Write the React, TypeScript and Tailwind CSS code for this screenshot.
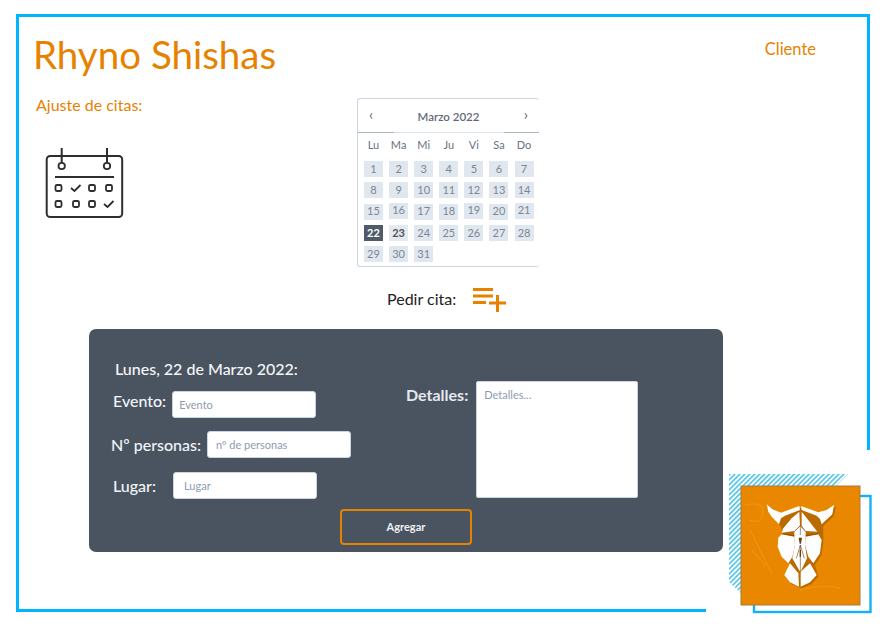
const weekDays = ['Lu', 'Ma', 'Mi', 'Ju', 'Vi', 'Sa', 'Do'];
const days = Array.from({ length: 31 }, (_, i) => i + 1);

function CalendarIcon() {
  const box = (x: number, y: number) => <rect key={`${x}-${y}`} x={x - 3} y={y - 3} width="6" height="6" rx="1.5" />;
  const check = (x: number, y: number) => <path key={`c${x}-${y}`} d={`M${x - 5} ${y}l3.5 3 6-6`} />;
  return (
    <svg width="80" height="72" viewBox="0 0 80 72" fill="none" stroke="#2e2e2e" strokeWidth="1.8" className="ml-[11px] mt-[35px]">
      <rect x="1.7" y="9" width="75.5" height="61" rx="3.5" strokeWidth="2" />
      <path d="M16.7 1v15M62 1v15" strokeWidth="2" />
      <circle cx="16.7" cy="19" r="3.2" fill="#fff" />
      <circle cx="62" cy="19" r="3.2" fill="#fff" />
      <path d="M10 30h59" strokeWidth="2" />
      {box(13.5, 41)}
      {check(31, 41)}
      {box(47, 41)}
      {box(64, 41)}
      {box(13.5, 57)}
      {box(31, 57)}
      {box(47, 57)}
      {check(64, 57)}
    </svg>
  );
}

function Logo() {
  return (
    <svg width="150" height="146" viewBox="725 470 150 146" className="absolute left-[725px] top-[470px]">
      <defs>
        <pattern id="hatch" width="3.5" height="5" patternUnits="userSpaceOnUse" patternTransform="rotate(45)">
          <rect width="1.8" height="5" fill="#5cc8ec" />
        </pattern>
        <filter id="soft" x="-20%" y="-20%" width="140%" height="140%">
          <feGaussianBlur stdDeviation="2.2" />
        </filter>
      </defs>
      <path d="M729 474H848L836 486H741V593L729 582Z" fill="url(#hatch)" />
      <rect x="754" y="496" width="116.5" height="116" fill="none" stroke="#14b1f7" strokeWidth="2.4" />
      <rect x="741" y="486" width="119" height="119" fill="#e98700" stroke="#a87a3c" strokeWidth="1" />
      <path d="M745 505q20-4 18 8t-14 7M752 550l14 16M750 530l22 44M800 590q20-6 40-2" fill="none" stroke="#f09a1e" strokeWidth="1.4" opacity="0.6" />
      <g transform="translate(755 495) scale(0.3333)">
        <path d="M35 28 78 53 133 33 140 33 190 52 237 30 232 58 200 88 200 135 195 175 175 205 185 240 165 262 135 275 105 262 88 240 105 205 80 185 68 155 70 128 80 113 72 88 50 65Z" fill="#a85f00" filter="url(#soft)" transform="translate(5 5)" opacity="0.7" />
        <g fill="#fff">
          <path d="M35 28 52 42 78 53 133 33 135 45 90 62 78 70 72 88 50 65 40 50Z" />
          <path d="M237 30 232 58 200 88 195 72 185 62 140 45 138 33 190 52 215 45Z" />
          <path d="M133 50 135 92 118 108 80 113 85 100 110 70Z" />
          <path d="M140 50 162 78 187 110 152 108 140 92Z" />
          <path d="M70 128 80 118 118 125 120 150 112 185 100 205 80 185 68 155Z" />
          <path d="M152 125 190 118 200 135 195 175 175 205 160 185 150 150Z" />
          <path d="M105 205 130 235 132 275 105 262 88 240Z" />
          <path d="M165 205 185 240 165 262 137 275 137 230Z" />
          <path d="M118 108 136 92 152 108 152 125 150 150 156 190 136 232 112 190 120 150 118 125Z" />
        </g>
        <path d="M136 92V120M136 150V232M118 110 136 92 152 110M80 116 118 122M190 116 152 122M124 190 136 150 148 190" stroke="#6b3d0a" strokeWidth="1.8" fill="none" />
        <path d="M131 128h10l-3 18h-4ZM134 165h4v20h-4Z" fill="#6b3d0a" />
      </g>
    </svg>
  );
}

function Calendar() {
  return (
    <div className="w-[182px] h-[169px] rounded-[3px] border-y border-l border-[#ced4de] bg-white">
      <div className="h-[33px] flex items-center justify-between px-[11px] text-[#5f6a78]">
        <span className="text-[15px] leading-none -mt-[3px]">‹</span>
        <span className="text-[11.5px] font-semibold pt-[2px]">Marzo 2022</span>
        <span className="text-[15px] leading-none -mt-[3px]">›</span>
      </div>
      <div className="flex h-px bg-[#dde3ea]">
        <div className="w-[36px] bg-[#a9b4c4]" />
        <div className="flex-1" />
        <div className="w-[35px] bg-[#a9b4c4]" />
      </div>
      <div className="grid grid-cols-[repeat(7,25.1px)] h-[28px] pl-[6px] pt-px text-[11px] text-[#687280]">
        {weekDays.map((d) => (
          <div key={d} className="w-[19px] h-[22px] flex items-center justify-center">{d}</div>
        ))}
      </div>
      <div className="grid grid-cols-[repeat(7,25.1px)] auto-rows-[21.3px] pl-[6px] text-[11px] text-[#7b8694]">
        {days.map((d) => (
          <div
            key={d}
            className={`w-[19px] h-[16px] flex items-center justify-center ${
              d === 22 ? 'bg-[#4f5b69] text-white font-bold' : d === 23 ? 'bg-[#e6eaf0] text-[#4b5563] font-bold' : 'bg-[#e1e7ef]'
            } ${d === 16 || d === 19 || d === 21 ? '-translate-y-px' : ''}`}
          >
            {d}
          </div>
        ))}
      </div>
    </div>
  );
}

function Field({ label, placeholder, gap, indent, labelClass }: { label: string; placeholder: string; gap: string; indent: string; labelClass?: string }) {
  return (
    <div className={`flex items-center ${indent}`}>
      <span className={`text-[16px] font-medium text-[#f1f5f9] whitespace-nowrap ${labelClass ?? ''}`}>{label}</span>
      <input
        placeholder={placeholder}
        className={`h-[27px] w-[144px] rounded-[3px] bg-white px-[6px] text-[11px] border border-[#cbd5e1] text-slate-700 placeholder:text-[#8e9bb0] ${gap}`}
      />
    </div>
  );
}

export default function App() {
  return (
    <div className="relative w-[893px] h-[637px] bg-white overflow-hidden font-['Lato','Noto_Sans',sans-serif]">
      <div className="absolute left-[16px] top-[14px] w-[854px] h-[598px] border-[3.5px] border-[#00b4ff]" />
      <div className="absolute left-[706px] top-[450px] w-[187px] h-[187px] bg-white" />
      <div className="relative pt-[14px] pl-[33px]">
        <div className="flex items-start h-[84px]">
          <h1 className="text-[38.5px] leading-none mt-[21px] text-[#e68200]">Rhyno Shishas</h1>
          <span className="ml-auto mr-[77px] mt-[23px] text-[16.5px] text-[#e68200]">Cliente</span>
        </div>
        <div className="ml-px flex items-start">
          <div className="w-[323px]">
            <p className="ml-[2px] text-[16px] leading-[14px] text-[#e68200]">Ajuste de citas:</p>
            <CalendarIcon />
          </div>
          <Calendar />
        </div>
        <div className="flex items-center ml-[354px] mt-[15px] h-[34px]">
          <span className="text-[16px] text-[#222]">Pedir cita:</span>
          <svg width="34" height="25" viewBox="0 0 34 25" fill="none" stroke="#e68200" strokeWidth="3" className="ml-[17px] mt-px">
            <path d="M0 2.500h20M0 9h20M0 15.500h13M16 16h17M24.500 8v17" />
          </svg>
        </div>
        <div className="mt-[13px] ml-[56px] w-[634px] h-[223px] rounded-[7px] bg-[#4a5360] pt-[30px]">
          <div className="flex">
            <div className="w-[275px] flex flex-col">
              <p className="ml-[26px] h-[20px] text-[16px] font-medium leading-[20px] text-[#f4f6f8]">Lunes, 22 de Marzo 2022:</p>
              <div className="mt-[12px] flex flex-col gap-[13px]">
                <Field label="Evento:" placeholder="Evento" gap="ml-[6px]" indent="ml-[24px]" labelClass="self-start leading-[20px]" />
                <Field label="Nº personas:" placeholder="nº de personas" gap="ml-[6px] pl-[8px]" indent="ml-[22px]" />
                <Field label="Lugar:" placeholder="Lugar" gap="ml-[17px] pl-[10px]" indent="ml-[24px] mt-px" />
              </div>
            </div>
            <div className="ml-[42px] mt-[22px] flex items-start">
              <span className="text-[16px] font-bold text-[#e5e9ee] mt-[2px]">Detalles:</span>
              <textarea
                placeholder="Detalles..."
                className="ml-[8px] h-[117px] w-[162px] resize-none rounded-[2px] bg-white pl-[7px] pr-[8px] py-[5px] text-[11px] border border-[#cbd5e1] placeholder:text-[#8e9bb0]"
              />
            </div>
          </div>
          <button className="mt-[10px] ml-[251px] w-[132px] h-[36px] rounded-[4px] border-2 border-[#e58200] text-[11px] font-bold text-[#eef1f4]">
            Agregar
          </button>
        </div>
      </div>
      <Logo />
    </div>
  );
}
